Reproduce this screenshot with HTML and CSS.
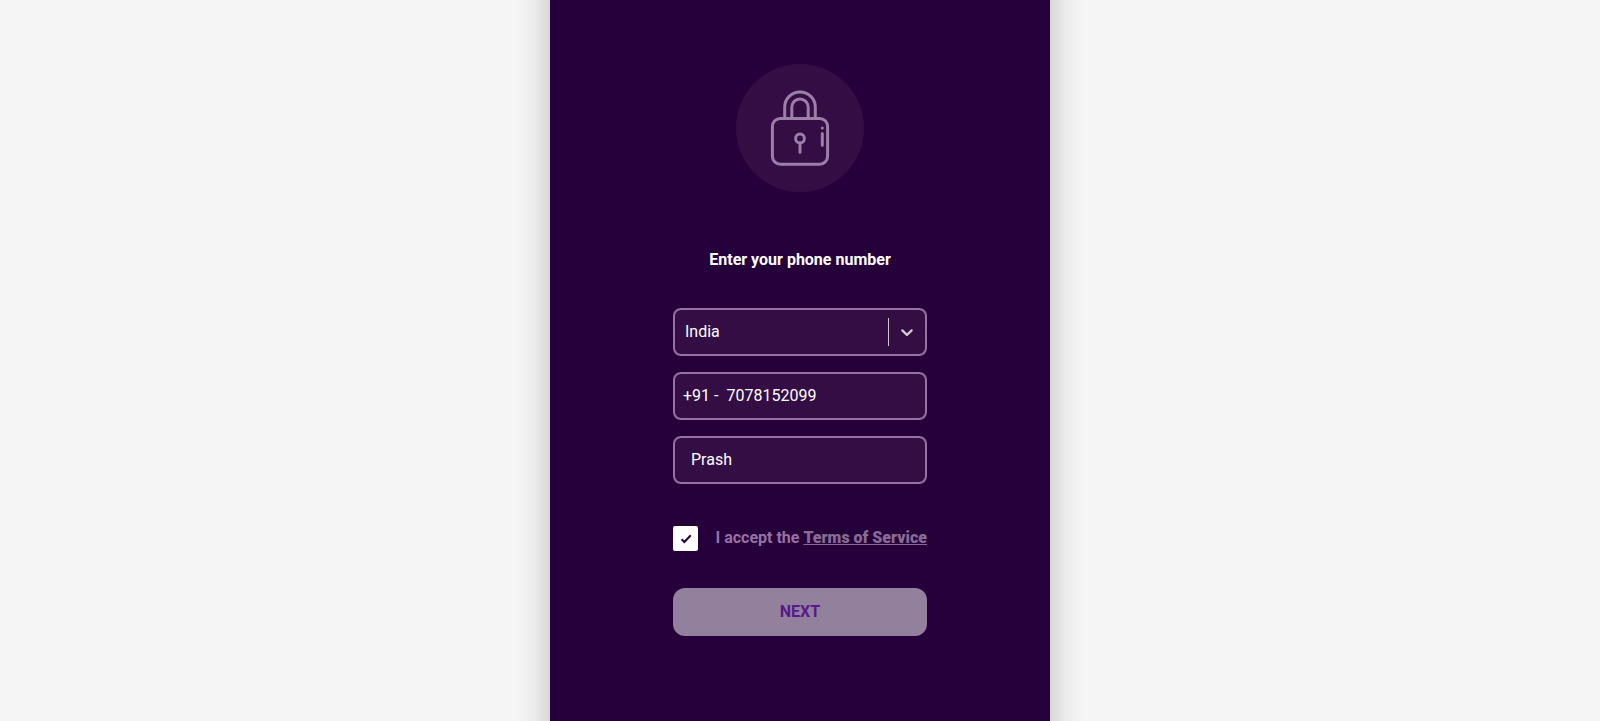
FILE: index.html
```html
<!DOCTYPE html>
<html lang="en">
<head>
<meta charset="utf-8">
<meta name="viewport" content="width=device-width, initial-scale=1">
<title>Enter your phone number</title>
<link rel="stylesheet" href="styles.css">
</head>
<body>
<main class="panel">
  <svg class="lock" viewBox="0 0 128 128" aria-hidden="true">
    <circle class="lock-disc" cx="64" cy="64" r="64"/>
    <g class="lock-lines">
      <rect x="36.4" y="54.4" width="55.2" height="45.8" rx="8"/>
      <path d="M48.7 54V43.2a15.3 15.3 0 0 1 30.6 0V54"/>
      <path d="M55.8 54V43.2a8.2 8.2 0 0 1 16.4 0V54"/>
      <circle cx="64" cy="74.5" r="4.4"/>
      <path class="round" d="M64 79v9.2M86.3 69.6v11.6M86.3 63.9v.1"/>
    </g>
  </svg>
  <h1 class="title">Enter your phone number</h1>
  <form class="form">
    <div class="field select-field">
      <select class="country" aria-label="Country"><option>India</option></select>
      <span class="divider"></span>
      <svg class="chevron" viewBox="0 0 20 20" aria-hidden="true"><path d="M4.516 7.548c0.436-0.446 1.043-0.481 1.576 0l3.908 3.747 3.908-3.747c0.533-0.481 1.141-0.446 1.574 0 0.436 0.445 0.408 1.197 0 1.615-0.406 0.418-4.695 4.502-4.695 4.502-0.217 0.223-0.502 0.335-0.787 0.335s-0.57-0.112-0.789-0.335c0 0-4.287-4.084-4.695-4.502s-0.436-1.17 0-1.615z"/></svg>
    </div>
    <div class="field phone-field">
      <label for="phone">+91 -</label>
      <input class="text-input" id="phone" type="tel" value="7078152099">
    </div>
    <div class="field name-field">
      <input class="text-input" type="text" value="Prash" aria-label="Name">
    </div>
    <div class="terms">
      <span class="check">
        <input class="check-box" id="accept" type="checkbox" checked>
        <svg class="check-mark" viewBox="0 0 25 25" aria-hidden="true"><path d="M8.6 13.2l2.8 2.8 6.4-6.8"/></svg>
      </span>
      <span class="terms-text"><label for="accept">I accept the</label> <a class="terms-link" href="#terms">Terms of Service</a></span>
    </div>
    <button class="next" type="submit">NEXT</button>
  </form>
</main>
</body>
</html>
```
FILE: styles.css
```css
* {
  box-sizing: border-box;
}

body {
  margin: 0;
  background: #f5f5f5;
  color: #fff;
  font-family: Roboto, sans-serif;
  font-size: 16px;
  line-height: 24px;
}

.panel {
  display: flex;
  flex-direction: column;
  align-items: center;
  position: relative;
  max-width: 500px;
  min-height: 100vh;
  margin: 0 auto;
  padding: 64px 16px;
  background: #26003a;
}

/* side shadow that keeps its strength up to the window's top and bottom edges */
.panel::before {
  content: "";
  position: fixed;
  z-index: -1;
  top: -40px;
  bottom: -40px;
  left: 50%;
  width: 100%;
  max-width: 500px;
  transform: translateX(-50%);
  box-shadow: 0 0 30px rgba(0, 0, 0, 0.25);
}

.lock {
  width: 128px;
  height: 128px;
}

.lock-disc {
  fill: #340d45;
}

.lock-lines {
  fill: none;
  stroke: #9b7fa9;
  stroke-width: 3;
}

.round {
  stroke-linecap: round;
}

.title {
  margin: 56px 0 36px;
  font-size: 16px;
  font-weight: 700;
  line-height: 24px;
}

.form {
  display: flex;
  flex-direction: column;
  gap: 16px;
  width: 254px;
}

.field {
  display: flex;
  align-items: center;
  height: 48px;
  border: 2px solid #9871a4;
  border-radius: 8px;
  background: #340d45;
}

.country,
.text-input {
  flex: 1;
  min-width: 0;
  border: 0;
  outline: 0;
  background: transparent;
  color: #fff;
  font: inherit;
}

.country {
  appearance: none;
  height: 100%;
  padding: 0 10px;
}

.divider {
  width: 1px;
  height: 28px;
  background: #ccc;
}

.chevron {
  width: 20px;
  height: 20px;
  margin: 0 8px;
  fill: #ccc;
}

.phone-field {
  gap: 8px;
  padding-left: 8px;
}

.name-field {
  padding-left: 16px;
}

.text-input {
  height: 24px;
  padding: 0 0 1px;
}

.terms {
  display: flex;
  justify-content: space-between;
  margin: 26px 0 21px;
  color: #9871a4;
  font-weight: 700;
  white-space: nowrap;
}

.check {
  display: grid;
  width: 25px;
  height: 25px;
}

.check-box,
.check-mark {
  grid-area: 1 / 1;
  width: 25px;
  height: 25px;
  margin: 0;
}

.check-box {
  appearance: none;
  border-radius: 2px;
  background: #fff;
}

.check-mark {
  fill: none;
  stroke: #26003a;
  stroke-width: 2;
  pointer-events: none;
}

.terms-link {
  color: #886c94;
  font-weight: 900;
}

.next {
  height: 48px;
  border: 0;
  border-radius: 12px;
  background: #93809c;
  color: #551a8b;
  font: inherit;
  font-weight: 700;
}
```
